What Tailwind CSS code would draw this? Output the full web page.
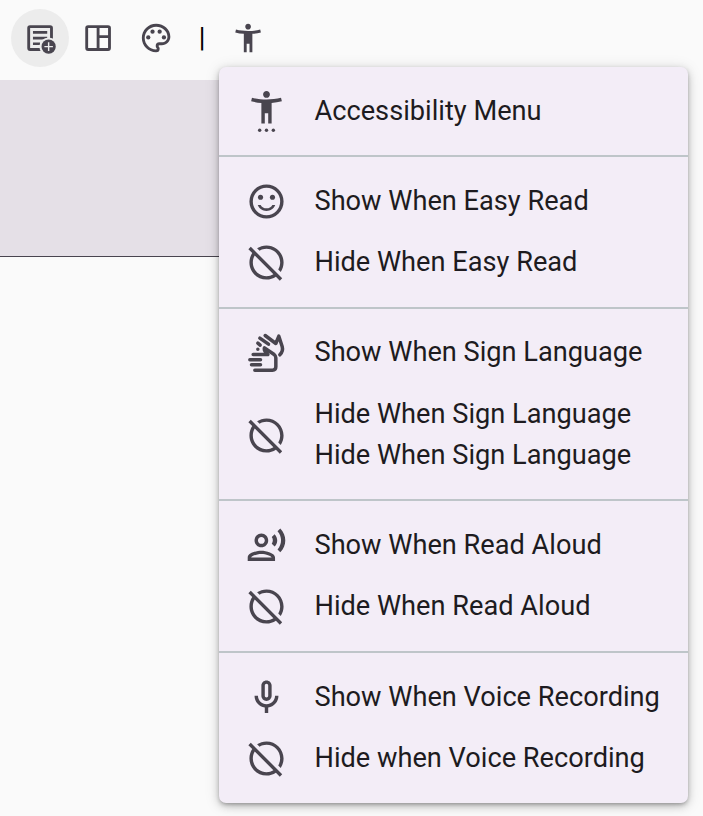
<!DOCTYPE html>
<html lang="en">
<head>
<meta charset="utf-8">
<title>Accessibility Menu</title>
<script src="https://cdn.jsdelivr.net/npm/@tailwindcss/browser@4"></script>
</head>
<body class="h-[816px] w-[703px] overflow-hidden bg-[#fafafa] font-['Roboto',sans-serif] text-[27.2px] leading-[41px] text-[#1d1b20]">
<svg class="hidden" aria-hidden="true">
  <symbol id="off" viewBox="0 0 24 24"><path d="M2.81 2.81 1.39 4.22l2.27 2.27C2.61 8.07 2 9.96 2 12c0 5.52 4.48 10 10 10 2.04 0 3.93-.61 5.51-1.66l2.27 2.27 1.41-1.41L2.81 2.81zM12 20c-4.41 0-8-3.59-8-8 0-1.48.41-2.86 1.12-4.06l10.93 10.94C14.86 19.59 13.48 20 12 20zM7.94 5.12 6.49 3.66C8.07 2.61 9.96 2 12 2c5.52 0 10 4.48 10 10 0 2.04-.61 3.93-1.66 5.51l-1.46-1.46C19.59 14.86 20 13.48 20 12c0-4.41-3.59-8-8-8-1.48 0-2.86.41-4.06 1.12z"/></symbol>
</svg>
<header class="flex h-20 items-start pl-[11px] pt-[9px] text-[#49454f]">
  <button class="flex size-[58px] items-center justify-center rounded-full bg-[#ececec]">
    <svg class="size-[34.2px] overflow-visible" viewBox="0 0 24 24">
      <rect x="4" y="4" width="16" height="16" rx="1" fill="none" stroke="currentColor" stroke-width="2"/>
      <path d="M7 8h10M7 12h10M7 16h5" fill="none" stroke="currentColor" stroke-width="1.8"/>
      <circle cx="18" cy="18" r="6.5" fill="#ececec"/>
      <circle cx="18" cy="18" r="5" fill="currentColor"/>
      <path d="M18 15v6M15 18h6" stroke="#ececec" stroke-width="1"/>
    </svg>
  </button>
  <button class="flex size-[58px] items-center justify-center">
    <svg class="size-[34.2px]" viewBox="0 0 24 24" fill="none" stroke="currentColor" stroke-width="2"><rect x="4" y="4" width="16" height="16" rx="1"/><path d="M12 4v16M12 11h8"/></svg>
  </button>
  <button class="flex size-[58px] items-center justify-center">
    <svg class="size-[34.2px]" viewBox="0 0 24 24" fill="currentColor"><path d="M12 22C6.49 22 2 17.51 2 12S6.49 2 12 2s10 4.04 10 9c0 3.31-2.69 6-6 6h-1.77c-.28 0-.5.22-.5.5 0 .12.05.23.13.33.41.47.64 1.06.64 1.67A2.5 2.5 0 0 1 12 22zm0-18c-4.41 0-8 3.59-8 8s3.59 8 8 8c.28 0 .5-.22.5-.5a.54.54 0 0 0-.14-.35c-.41-.46-.63-1.05-.63-1.65a2.5 2.5 0 0 1 2.5-2.5H16c2.21 0 4-1.79 4-4 0-3.86-3.59-7-8-7z"/><circle cx="6.5" cy="11.5" r="1.5"/><circle cx="9.5" cy="7.5" r="1.5"/><circle cx="14.5" cy="7.5" r="1.5"/><circle cx="17.5" cy="11.5" r="1.5"/></svg>
  </button>
  <span class="flex h-[58px] w-[34px] items-center justify-center text-[27.2px] text-black">|</span>
  <button class="flex size-[58px] items-center justify-center">
    <svg class="size-[34.2px]" viewBox="0 0 24 24" fill="currentColor"><path d="M20.5 6c-2.61.7-5.67 1-8.5 1s-5.89-.3-8.5-1L3 8c1.86.5 4 .83 6 1v13h2v-6h2v6h2V9c2-.17 4.14-.5 6-1l-.5-2zM12 6c1.1 0 2-.9 2-2s-.9-2-2-2-2 .9-2 2 .9 2 2 2z"/></svg>
  </button>
</header>
<main class="h-[177px] w-[600px] border-b border-[#49454f] bg-[#e5e0e7]"></main>

<nav class="absolute left-[219px] top-[67px] h-[736px] w-[469px] rounded-[7px] bg-[#f3edf7] shadow-[0_2px_4px_-1px_rgba(0,0,0,0.3),0_3px_8px_0_rgba(0,0,0,0.18),0_2px_16px_0_rgba(0,0,0,0.12)] [&_svg]:size-[41px] [&_svg]:shrink-0 [&_svg]:fill-current [&_svg]:text-[#49454f] [&_li]:flex [&_li]:items-center [&_li]:gap-[27.5px] [&_li]:pl-[27px] [&_li]:py-[10px] [&_li]:whitespace-nowrap">
  <ul class="flex h-[90px] flex-col justify-center border-b-2 border-[#bec5c9]">
    <li><svg viewBox="0 0 24 24"><path d="M20.5 4c-2.61.7-5.67 1-8.5 1s-5.89-.3-8.5-1L3 6c1.86.5 4 .83 6 1v12h2v-6h2v6h2V7c2-.17 4.14-.5 6-1l-.5-2zM12 4c1.1 0 2-.9 2-2s-.9-2-2-2-2 .9-2 2 .9 2 2 2z"/><circle cx="8" cy="23" r="1"/><circle cx="12" cy="23" r="1"/><circle cx="16" cy="23" r="1"/></svg><span>Accessibility Menu</span></li>
  </ul>
  <ul class="flex h-[152px] flex-col justify-center border-b-2 border-[#bec5c9]">
    <li><svg viewBox="0 0 24 24"><path fill-rule="evenodd" d="M12 2a10 10 0 1 0 0 20 10 10 0 0 0 0-20zm0 18a8 8 0 1 1 0-16 8 8 0 0 1 0 16z"/><circle cx="8.5" cy="9.5" r="1.5"/><circle cx="15.5" cy="9.5" r="1.5"/><path d="M12 16c-1.48 0-2.75-.81-3.45-2H6.88c.8 2.05 2.79 3.5 5.12 3.5s4.32-1.45 5.12-3.5h-1.67c-.69 1.19-1.97 2-3.45 2z"/></svg><span>Show When Easy Read</span></li>
    <li><svg><use href="#off"/></svg><span>Hide When Easy Read</span></li>
  </ul>
  <ul class="flex h-[192px] flex-col justify-start border-b-2 border-[#bec5c9] pt-[13px]">
    <li><svg viewBox="28.5 34.5 123 123"><g fill="none" stroke="currentColor" stroke-width="10.5" stroke-linecap="round" stroke-linejoin="round"><path d="M50 102H94M40 118H72M45 133H72M55 149H108Q118 149 118 139V112Q118 106 113 102L84 82Q81 91 94 102"/><path d="M70 53 96 71M86 45 118 69 127 47 137 78Q141 92 130 103M64 86V86.1M64 68 71 74"/></g></svg><span>Show When Sign Language</span></li>
    <li class="mt-px"><svg><use href="#off"/></svg><span>Hide When Sign Language<br>Hide When Sign Language</span></li>
  </ul>
  <ul class="flex h-[152px] flex-col justify-center border-b-2 border-[#bec5c9]">
    <li><svg viewBox="0 0 24 24"><path d="M9 13c2.21 0 4-1.79 4-4s-1.79-4-4-4-4 1.79-4 4 1.79 4 4 4zm0-6c1.1 0 2 .9 2 2s-.9 2-2 2-2-.9-2-2 .9-2 2-2zm0 8c-2.67 0-8 1.34-8 4v2h16v-2c0-2.66-5.33-4-8-4zm-6 4c.22-.72 3.31-2 6-2 2.7 0 5.8 1.29 6 2H3zM15.08 7.05c.84 1.18.84 2.71 0 3.89l1.68 1.69c2.02-2.02 2.02-5.07 0-7.27l-1.68 1.69zM20.07 2l-1.63 1.63c2.77 3.02 2.77 7.56 0 10.74L20.07 16c3.9-3.89 3.91-9.95 0-14z"/></svg><span>Show When Read Aloud</span></li>
    <li><svg><use href="#off"/></svg><span>Hide When Read Aloud</span></li>
  </ul>
  <ul class="flex h-[150px] flex-col justify-center">
    <li><svg viewBox="0 0 24 24"><path d="M12 14c1.66 0 3-1.34 3-3V5c0-1.66-1.34-3-3-3S9 3.34 9 5v6c0 1.66 1.34 3 3 3zm-1-9c0-.55.45-1 1-1s1 .45 1 1v6c0 .55-.45 1-1 1s-1-.45-1-1V5zm6 6c0 2.76-2.24 5-5 5s-5-2.24-5-5H5c0 3.53 2.61 6.43 6 6.92V21h2v-3.08c3.39-.49 6-3.39 6-6.92h-2z"/></svg><span>Show When Voice Recording</span></li>
    <li><svg><use href="#off"/></svg><span>Hide when Voice Recording</span></li>
  </ul>
</nav>
</body>
</html>
